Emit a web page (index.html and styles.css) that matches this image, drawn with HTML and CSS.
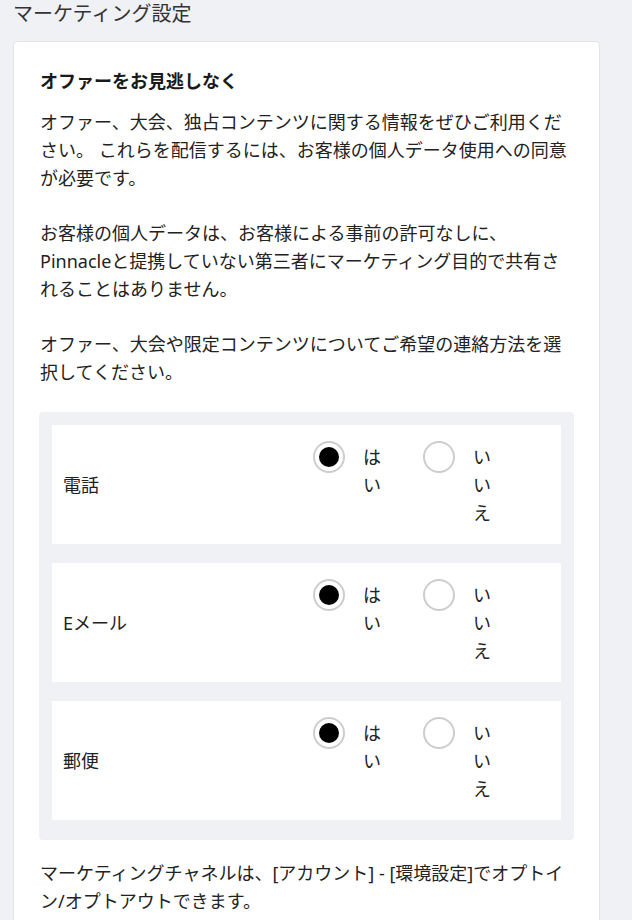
FILE: index.html
```html
<!DOCTYPE html>
<html lang="ja">
<head>
<meta charset="utf-8">
<title>マーケティング設定</title>
<link rel="stylesheet" href="styles.css">
</head>
<body>
<h1 class="page-title">マーケティング設定</h1>
<section class="card">
  <h2 class="card-heading">オファーをお見逃しなく</h2>
  <p class="text">オファー、大会、独占コンテンツに関する情報をぜひご利用ください。 これらを配信するには、お客様の個人データ使用への同意が必要です。</p>
  <p class="text">お客様の個人データは、お客様による事前の許可なしに、Pinnacleと提携していない第三者にマーケティング目的で共有されることはありません。</p>
  <p class="text text-last">オファー、大会や限定コンテンツについてご希望の連絡方法を選択してください。</p>

  <div class="channels">
    <div class="channel">
      <div class="channel-name">電話</div>
      <div class="options">
        <label class="option"><span class="radio checked"></span><span class="opt-label">はい</span></label>
        <label class="option"><span class="radio"></span><span class="opt-label">いいえ</span></label>
      </div>
    </div>
    <div class="channel">
      <div class="channel-name">Eメール</div>
      <div class="options">
        <label class="option"><span class="radio checked"></span><span class="opt-label">はい</span></label>
        <label class="option"><span class="radio"></span><span class="opt-label">いいえ</span></label>
      </div>
    </div>
    <div class="channel">
      <div class="channel-name">郵便</div>
      <div class="options">
        <label class="option"><span class="radio checked"></span><span class="opt-label">はい</span></label>
        <label class="option"><span class="radio"></span><span class="opt-label">いいえ</span></label>
      </div>
    </div>
  </div>

  <p class="text footer-text">マーケティングチャネルは、[アカウント] - [環境設定]でオプトイン/オプトアウトできます。</p>
</section>
</body>
</html>
```

FILE: styles.css
```css
html, body {
  margin: 0;
  padding: 0;
}
body {
  background: #f0f1f5;
  font-family: "Noto Sans", "Noto Sans CJK JP", sans-serif;
  color: #222;
  overflow: hidden;
  height: 920px;
}
.page-title {
  margin: 0;
  padding: 1px 0 0 13px;
  font-size: 20px;
  line-height: 25px;
  font-weight: normal;
  color: #333;
}
.card {
  margin: 15px 0 0 13px;
  width: 587px;
  box-sizing: border-box;
  background: #fff;
  border: 1px solid #e2e3e7;
  border-radius: 4px;
  padding: 25px 25px 40px 25px;
}
.card-heading {
  margin: 0 0 13px 1px;
  font-size: 18px;
  line-height: 28px;
  font-weight: bold;
  color: #1a1a1a;
}
.text {
  margin: 0 0 27px 1px;
  font-size: 18px;
  line-height: 28px;
}
.text.text-last {
  margin-bottom: 26px;
}
.channels {
  background: #f0f1f5;
  border-radius: 4px;
  padding: 13px 13px 20px 13px;
  display: flex;
  flex-direction: column;
  gap: 19px;
}
.channel {
  background: #fff;
  display: flex;
  align-items: center;
  height: 119px;
}
.channel-name {
  flex: 0 0 261px;
  box-sizing: border-box;
  padding-left: 11px;
  font-size: 18px;
  line-height: 28px;
}
.options {
  display: flex;
  align-self: flex-start;
  padding-top: 16px;
}
.option {
  display: flex;
  align-items: flex-start;
  margin-right: 40px;
}
.radio {
  width: 32px;
  height: 32px;
  box-sizing: border-box;
  border: 2px solid #cdcdcd;
  border-radius: 50%;
  background: #fff;
  display: flex;
  align-items: center;
  justify-content: center;
  flex: 0 0 32px;
}
.radio.checked::after {
  content: "";
  width: 20px;
  height: 20px;
  border-radius: 50%;
  background: #000;
}
.opt-label {
  width: 20px;
  margin-left: 18px;
  margin-top: 2px;
  font-size: 18px;
  line-height: 28px;
}
.footer-text {
  margin: 19px 0 0 1px;
}
```
